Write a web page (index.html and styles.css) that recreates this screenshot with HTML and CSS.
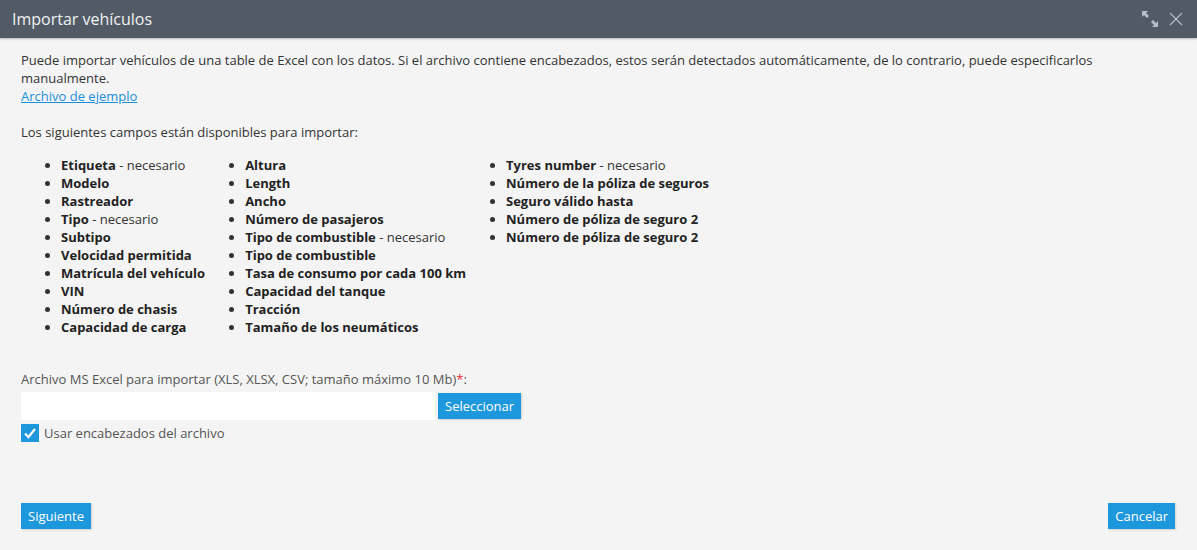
FILE: index.html
```html
<!DOCTYPE html>
<html lang="es">
<head>
    <meta charset="UTF-8">
    <title>Importar vehículos</title>
    <link rel="stylesheet" href="styles.css">
</head>
<body>
    <div class="dialog">
        <div class="dialog-header">
            <span class="dialog-title">Importar vehículos</span>
            <div class="header-tools">
                <svg class="tool-icon" width="18" height="18" viewBox="0 0 18 18">
                    <polygon points="1,1 7,1 5,3 8,6 6,8 3,5 1,7" fill="#b9bec4"/>
                    <polygon points="17,17 11,17 13,15 10,12 12,10 15,13 17,11" fill="#b9bec4"/>
                </svg>
                <svg class="tool-icon" width="14" height="14" viewBox="0 0 14 14">
                    <path d="M1 1 L13 13 M13 1 L1 13" stroke="#b9bec4" stroke-width="1.1" fill="none"/>
                </svg>
            </div>
        </div>

        <div class="dialog-body">
            <p class="intro">
                Puede importar vehículos de una table de Excel con los datos. Si el archivo contiene encabezados, estos serán detectados automáticamente, de lo contrario, puede especificarlos manualmente.<br>
                <a href="#" class="link">Archivo de ejemplo</a>
            </p>

            <p class="fields-title">Los siguientes campos están disponibles para importar:</p>

            <div class="columns">
                <ul class="field-list">
                    <li><b>Etiqueta</b> - necesario</li>
                    <li><b>Modelo</b></li>
                    <li><b>Rastreador</b></li>
                    <li><b>Tipo</b> - necesario</li>
                    <li><b>Subtipo</b></li>
                    <li><b>Velocidad permitida</b></li>
                    <li><b>Matrícula del vehículo</b></li>
                    <li><b>VIN</b></li>
                    <li><b>Número de chasis</b></li>
                    <li><b>Capacidad de carga</b></li>
                </ul>
                <ul class="field-list">
                    <li><b>Altura</b></li>
                    <li><b>Length</b></li>
                    <li><b>Ancho</b></li>
                    <li><b>Número de pasajeros</b></li>
                    <li><b>Tipo de combustible</b> - necesario</li>
                    <li><b>Tipo de combustible</b></li>
                    <li><b>Tasa de consumo por cada 100 km</b></li>
                    <li><b>Capacidad del tanque</b></li>
                    <li><b>Tracción</b></li>
                    <li><b>Tamaño de los neumáticos</b></li>
                </ul>
                <ul class="field-list">
                    <li><b>Tyres number</b> - necesario</li>
                    <li><b>Número de la póliza de seguros</b></li>
                    <li><b>Seguro válido hasta</b></li>
                    <li><b>Número de póliza de seguro 2</b></li>
                    <li><b>Número de póliza de seguro 2</b></li>
                </ul>
            </div>

            <div class="file-label">Archivo MS Excel para importar (XLS, XLSX, CSV; tamaño máximo 10 Mb)<span class="required">*</span>:</div>
            <div class="file-row">
                <div class="file-input"></div>
                <button class="button">Seleccionar</button>
            </div>
            <label class="check-row">
                <span class="checkbox">
                    <svg width="18" height="18" viewBox="0 0 18 18">
                        <path d="M4 9.5 L7.5 13 L14 5" stroke="#fff" stroke-width="2.2" fill="none"/>
                    </svg>
                </span>
                Usar encabezados del archivo
            </label>
        </div>

        <div class="dialog-footer">
            <button class="button">Siguiente</button>
            <button class="button">Cancelar</button>
        </div>
    </div>
</body>
</html>
```

FILE: styles.css
```css
body {
    margin: 0;
    background: #f4f4f4;
    font-family: "Open Sans", "Liberation Sans", sans-serif;
    font-size: 13px;
    line-height: 18px;
    color: #333;
}

.dialog {
    height: 550px;
    display: flex;
    flex-direction: column;
}

.dialog-header {
    height: 38px;
    background: #525b65;
    display: flex;
    align-items: center;
    justify-content: space-between;
    padding: 0 14px 0 12px;
    box-shadow: 0 1px 2px rgba(0, 0, 0, 0.25);
}

.dialog-title {
    color: #f0f1f2;
    font-size: 16px;
    margin-top: -1px;
}

.header-tools {
    display: flex;
    align-items: center;
    gap: 10px;
}

.tool-icon {
    display: block;
}

.dialog-body {
    padding: 13px 22px 0 21px;
}

.intro {
    margin: 0;
}

.link {
    color: #1a8fdc;
}

.fields-title {
    margin: 18px 0 0;
}

.columns {
    display: flex;
    margin-top: 15px;
}

.field-list {
    margin: 0;
    padding-left: 40px;
}

.field-list b {
    font-weight: 700;
    color: #222;
}

.file-label {
    margin-top: 34px;
    color: #555;
}

.required {
    color: #e8262b;
}

.file-row {
    display: flex;
    align-items: center;
    margin-top: 4px;
}

.file-input {
    width: 414px;
    height: 28px;
    background: #fff;
    margin-right: 3px;
}

.button {
    background: #1e98dc;
    color: #fff;
    border: none;
    height: 26px;
    padding: 0 7px;
    font-family: inherit;
    font-size: 13px;
    cursor: pointer;
    box-shadow: 1px 1px 2px rgba(0, 0, 0, 0.15);
}

.check-row {
    display: flex;
    align-items: center;
    margin-top: 4px;
    gap: 5px;
    color: #555;
}

.checkbox {
    width: 18px;
    height: 18px;
    background: #1e98dc;
    display: block;
}

.checkbox svg {
    display: block;
}

.dialog-footer {
    margin-top: auto;
    display: flex;
    justify-content: space-between;
    padding: 0 22px 21px 21px;
}
```
